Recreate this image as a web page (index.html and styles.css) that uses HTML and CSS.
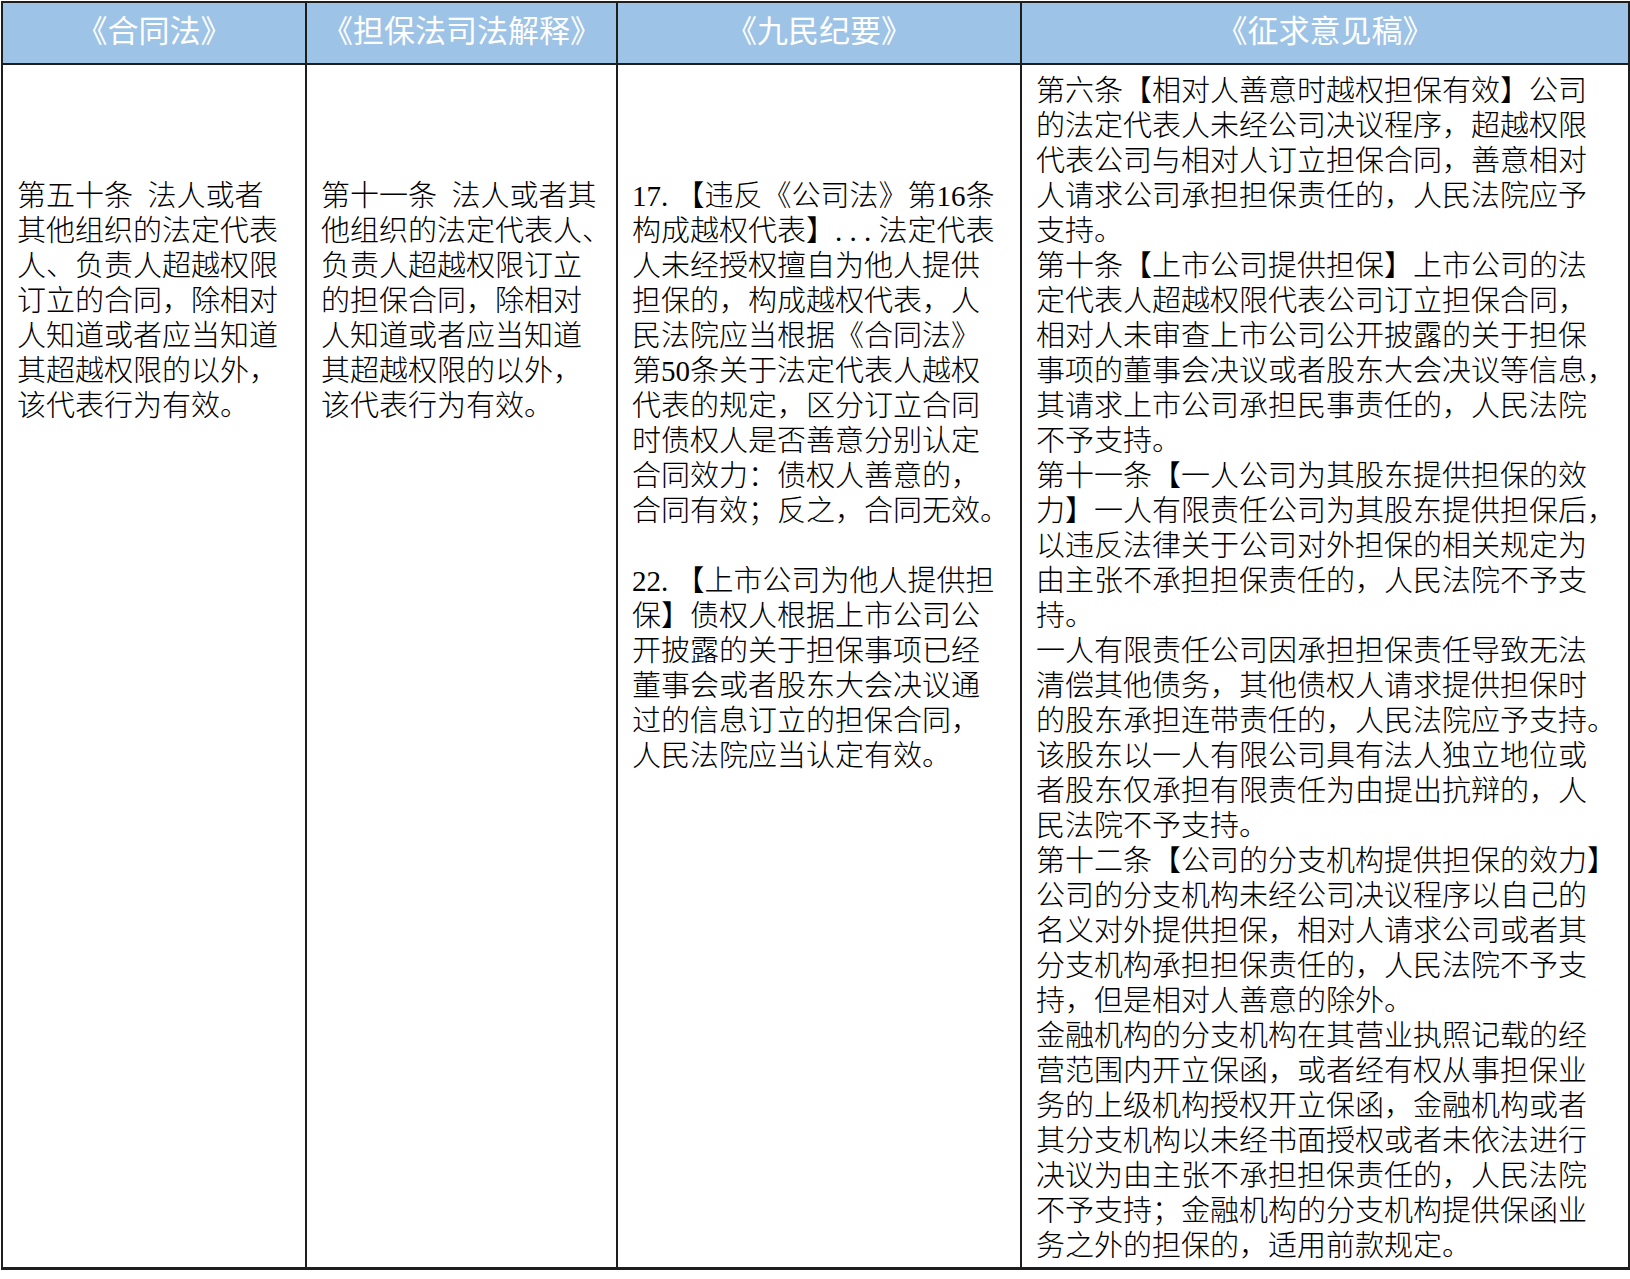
FILE: index.html
```html
<!DOCTYPE html>
<html lang="zh-CN">
<head>
<meta charset="utf-8">
<title>担保规则对比</title>
<link rel="stylesheet" href="styles.css">
</head>
<body>
<table class="cmp">
  <colgroup>
    <col class="w1"><col class="w2"><col class="w3"><col class="w4">
  </colgroup>
  <thead>
    <tr>
      <th>《合同法》</th>
      <th>《担保法司法解释》</th>
      <th>《九民纪要》</th>
      <th>《征求意见稿》</th>
    </tr>
  </thead>
  <tbody>
    <tr>
      <td class="low">第五十条<span class="sp"></span>法人或者<br>其他组织的法定代表<br>人、负责人超越权限<br>订立的合同，除相对<br>人知道或者应当知道<br>其超越权限的以外，<br>该代表行为有效。</td>
      <td class="low">第十一条<span class="sp"></span>法人或者其<br>他组织的法定代表人、<br>负责人超越权限订立<br>的担保合同，除相对<br>人知道或者应当知道<br>其超越权限的以外，<br>该代表行为有效。</td>
      <td class="low">17<span class="dot">.</span>【违反《公司法》第16条<br>构成越权代表】<span class="dot">...</span>法定代表<br>人未经授权擅自为他人提供<br>担保的，构成越权代表，人<br>民法院应当根据《合同法》<br>第50条关于法定代表人越权<br>代表的规定，区分订立合同<br>时债权人是否善意分别认定<br>合同效力：债权人善意的，<br>合同有效；反之，合同无效。<br><br>22<span class="dot">.</span>【上市公司为他人提供担<br>保】债权人根据上市公司公<br>开披露的关于担保事项已经<br>董事会或者股东大会决议通<br>过的信息订立的担保合同，<br>人民法院应当认定有效。</td>
      <td class="full">第六条【相对人善意时越权担保有效】公司<br>的法定代表人未经公司决议程序，超越权限<br>代表公司与相对人订立担保合同，善意相对<br>人请求公司承担担保责任的，人民法院应予<br>支持。<br>第十条【上市公司提供担保】上市公司的法<br>定代表人超越权限代表公司订立担保合同，<br>相对人未审查上市公司公开披露的关于担保<br>事项的董事会决议或者股东大会决议等信息，<br>其请求上市公司承担民事责任的，人民法院<br>不予支持。<br>第十一条【一人公司为其股东提供担保的效<br>力】一人有限责任公司为其股东提供担保后，<br>以违反法律关于公司对外担保的相关规定为<br>由主张不承担担保责任的，人民法院不予支<br>持。<br>一人有限责任公司因承担担保责任导致无法<br>清偿其他债务，其他债权人请求提供担保时<br>的股东承担连带责任的，人民法院应予支持。<br>该股东以一人有限公司具有法人独立地位或<br>者股东仅承担有限责任为由提出抗辩的，人<br>民法院不予支持。<br>第十二条【公司的分支机构提供担保的效力】<br>公司的分支机构未经公司决议程序以自己的<br>名义对外提供担保，相对人请求公司或者其<br>分支机构承担担保责任的，人民法院不予支<br>持，但是相对人善意的除外。<br>金融机构的分支机构在其营业执照记载的经<br>营范围内开立保函，或者经有权从事担保业<br>务的上级机构授权开立保函，金融机构或者<br>其分支机构以未经书面授权或者未依法进行<br>决议为由主张不承担担保责任的，人民法院<br>不予支持；金融机构的分支机构提供保函业<br>务之外的担保的，适用前款规定。</td>
    </tr>
  </tbody>
</table>
</body>
</html>
```
FILE: styles.css
```css
html, body {
  margin: 0;
  background: #ffffff;
}
body {
  padding: 1px 0 0 1px;
}
.cmp {
  border-collapse: collapse;
  table-layout: fixed;
  width: 1627px;
  font-family: "Liberation Serif", "Noto Sans CJK SC", serif;
  font-size: 29px;
  line-height: 35px;
  color: #000000;
  font-weight: 300;
}
.w1 { width: 304px; }
.w2 { width: 311px; }
.w3 { width: 404px; }
.w4 { width: 608px; }
.cmp th,
.cmp td {
  border: 2px solid #1e1e1e;
}
.cmp th {
  background: #9dc3e6;
  color: #ffffff;
  font-family: "Noto Sans CJK SC", sans-serif;
  font-size: 31px;
  font-weight: 400;
  height: 52px;
  padding: 0 0 8px 0;
  line-height: 48px;
  text-align: center;
  white-space: nowrap;
}
.cmp td {
  vertical-align: top;
  text-align: left;
  white-space: nowrap;
  padding: 9px 8px 3px 14px;
}
.cmp td.low {
  padding-top: 114px;
}
.cmp tbody tr:last-child td {
  border-bottom-width: 3px;
}
.sp {
  display: inline-block;
  width: 0.5em;
}
.dot {
  letter-spacing: 0.25em;
}
```
